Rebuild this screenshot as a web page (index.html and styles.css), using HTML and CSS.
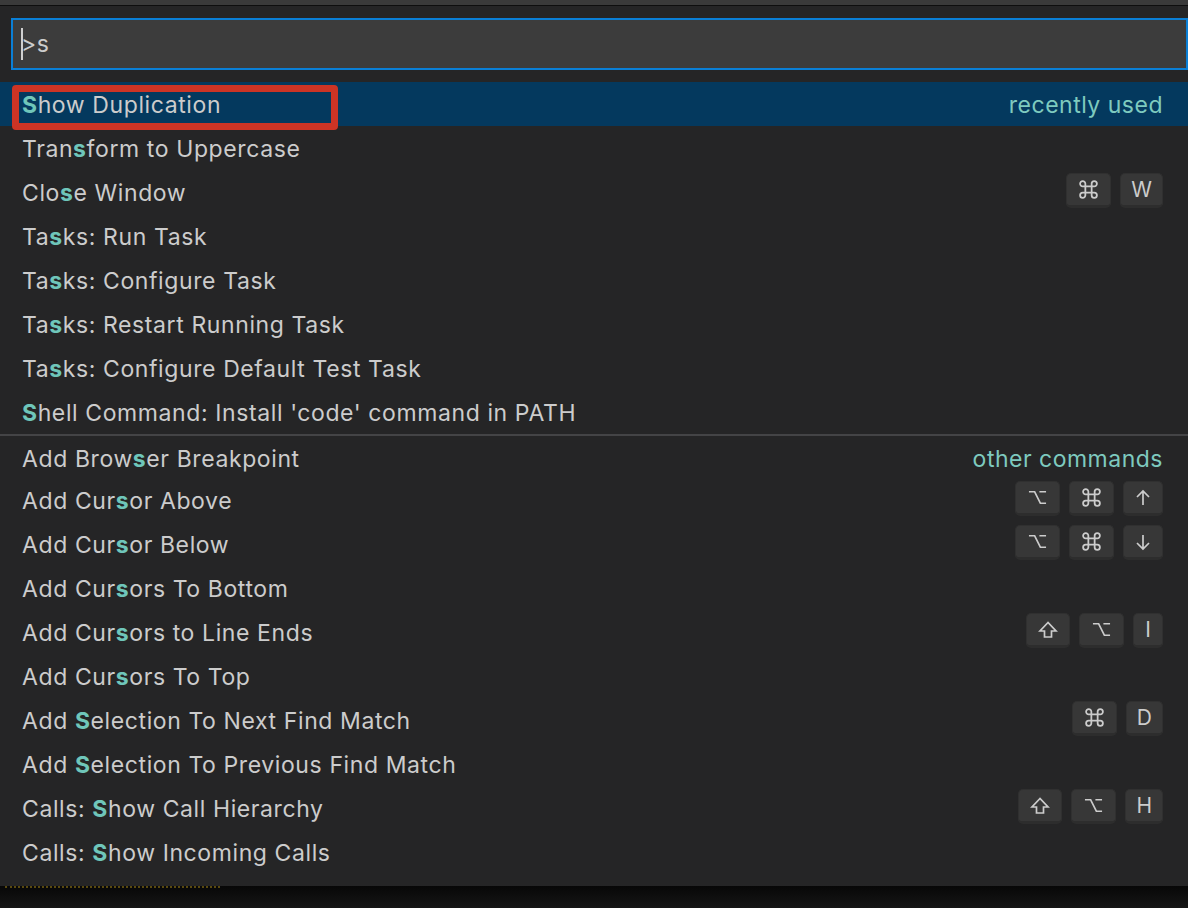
FILE: index.html
```html
<!DOCTYPE html>
<html>
<head>
<meta charset="utf-8">
<link rel="stylesheet" href="styles.css">
</head>
<body>
<div class="topbar"></div>
<div class="panel">
  <div class="input"><span class="cursor"></span><span class="query">&gt;s</span></div>
  <div class="list">
    <div class="row selected"><span class="label"><b>S</b>how Duplication</span><span class="group">recently used</span><span class="mark"></span></div>
    <div class="row"><span class="label">Tran<b>s</b>form to Uppercase</span></div>
    <div class="row"><span class="label">Clo<b>s</b>e Window</span><span class="keys"><kbd class="cmd"><svg viewBox="0 0 20 20"><path d="M7 7V4.5A2.5 2.5 0 1 0 4.5 7H15.5A2.5 2.5 0 1 0 13 4.5V15.5A2.5 2.5 0 1 0 15.5 13H4.5A2.5 2.5 0 1 0 7 15.5Z"/></svg></kbd><kbd>W</kbd></span></div>
    <div class="row"><span class="label">Ta<b>s</b>ks: Run Task</span></div>
    <div class="row"><span class="label">Ta<b>s</b>ks: Configure Task</span></div>
    <div class="row"><span class="label">Ta<b>s</b>ks: Restart Running Task</span></div>
    <div class="row"><span class="label">Ta<b>s</b>ks: Configure Default Test Task</span></div>
    <div class="row"><span class="label"><b>S</b>hell Command: Install 'code' command in PATH</span></div>
    <div class="row sep"><span class="label">Add Brow<b>s</b>er Breakpoint</span><span class="group">other commands</span></div>
    <div class="row"><span class="label">Add Cur<b>s</b>or Above</span><span class="keys"><kbd class="opt"><svg viewBox="0 0 20 20"><path d="M1 4H7L13 16H19M12 4H19"/></svg></kbd><kbd class="cmd"><svg viewBox="0 0 20 20"><path d="M7 7V4.5A2.5 2.5 0 1 0 4.5 7H15.5A2.5 2.5 0 1 0 13 4.5V15.5A2.5 2.5 0 1 0 15.5 13H4.5A2.5 2.5 0 1 0 7 15.5Z"/></svg></kbd><kbd class="arrow"><svg viewBox="0 0 20 20"><path d="M10 3V17M4 9L10 3L16 9"/></svg></kbd></span></div>
    <div class="row"><span class="label">Add Cur<b>s</b>or Below</span><span class="keys"><kbd class="opt"><svg viewBox="0 0 20 20"><path d="M1 4H7L13 16H19M12 4H19"/></svg></kbd><kbd class="cmd"><svg viewBox="0 0 20 20"><path d="M7 7V4.5A2.5 2.5 0 1 0 4.5 7H15.5A2.5 2.5 0 1 0 13 4.5V15.5A2.5 2.5 0 1 0 15.5 13H4.5A2.5 2.5 0 1 0 7 15.5Z"/></svg></kbd><kbd class="arrow"><svg viewBox="0 0 20 20"><path d="M10 3V17M4 11L10 17L16 11"/></svg></kbd></span></div>
    <div class="row"><span class="label">Add Cur<b>s</b>ors To Bottom</span></div>
    <div class="row"><span class="label">Add Cur<b>s</b>ors to Line Ends</span><span class="keys"><kbd class="shift"><svg viewBox="0 0 20 20"><path d="M10 2.5L2 11H6.5V17H13.5V11H18Z"/></svg></kbd><kbd class="opt"><svg viewBox="0 0 20 20"><path d="M1 4H7L13 16H19M12 4H19"/></svg></kbd><kbd>I</kbd></span></div>
    <div class="row"><span class="label">Add Cur<b>s</b>ors To Top</span></div>
    <div class="row"><span class="label">Add <b>S</b>election To Next Find Match</span><span class="keys"><kbd class="cmd"><svg viewBox="0 0 20 20"><path d="M7 7V4.5A2.5 2.5 0 1 0 4.5 7H15.5A2.5 2.5 0 1 0 13 4.5V15.5A2.5 2.5 0 1 0 15.5 13H4.5A2.5 2.5 0 1 0 7 15.5Z"/></svg></kbd><kbd>D</kbd></span></div>
    <div class="row"><span class="label">Add <b>S</b>election To Previous Find Match</span></div>
    <div class="row"><span class="label">Calls: <b>S</b>how Call Hierarchy</span><span class="keys"><kbd class="shift"><svg viewBox="0 0 20 20"><path d="M10 2.5L2 11H6.5V17H13.5V11H18Z"/></svg></kbd><kbd class="opt"><svg viewBox="0 0 20 20"><path d="M1 4H7L13 16H19M12 4H19"/></svg></kbd><kbd>H</kbd></span></div>
    <div class="row"><span class="label">Calls: <b>S</b>how Incoming Calls</span></div>
  </div>
</div>
<div class="below"><div class="squiggle"></div></div>
</body>
</html>
```
FILE: styles.css
```css
html, body {
  margin: 0;
  padding: 0;
  background: #1e1e1e;
  font-family: Inter, "Open Sans", "Liberation Sans", sans-serif;
  overflow: hidden;
}
.topbar {
  height: 5px;
  background: #3a3a3a;
  border-bottom: 1px solid #0e0e0e;
}
.panel {
  background: #252526;
  padding: 12px 0 10px 11px;
  height: 880px;
  box-sizing: border-box;
}
.input {
  height: 52px;
  box-sizing: border-box;
  border: 2px solid #0a7fd6;
  background: #3c3c3c;
  display: flex;
  align-items: center;
  padding-left: 8px;
  color: #cccccc;
  font-size: 23px;
}
.cursor {
  width: 2px;
  height: 32px;
  background: #cfcfcf;
  margin-right: -2px;
}
.query {
  letter-spacing: 0.6px;
}
.list {
  margin-top: 12px;
  margin-left: -11px;
}
.row {
  position: relative;
  height: 44px;
  box-sizing: border-box;
  display: flex;
  align-items: center;
  justify-content: space-between;
  padding: 2px 25px 0 22px;
  color: #cccccc;
  font-size: 23px;
  letter-spacing: 0.6px;
}
.row b {
  color: #6fc6ba;
  font-weight: 700;
}
.selected {
  background: #04395e;
}
.sep {
  border-top: 2px solid #444446;
  padding-top: 3px;
}
.group {
  color: #7ecabf;
  letter-spacing: 0.5px;
}
.keys {
  display: flex;
  gap: 9px;
  margin-top: -2px;
}
kbd {
  font-family: Inter, "DejaVu Sans", sans-serif;
  font-size: 21px;
  letter-spacing: 0;
  color: #cccccc;
  height: 35px;
  box-sizing: border-box;
  padding: 0 10px;
  min-width: 30px;
  display: flex;
  align-items: center;
  justify-content: center;
  background: #373737;
  border: 1px solid #303030;
  border-bottom: 3px solid #2d2d2d;
  border-radius: 5px;
  margin-top: -3px;
}
kbd svg {
  width: 20px;
  height: 20px;
  fill: none;
  stroke: #cccccc;
  stroke-width: 1.7;
  stroke-linejoin: miter;
}
kbd.cmd svg {
  width: 21px;
  height: 21px;
}
kbd.cmd, kbd.shift {
  padding: 0 11px;
}
kbd.opt {
  padding: 0 12px;
}
kbd.opt svg {
  width: 19px;
  height: 19px;
}
kbd.arrow {
  padding: 0 9px;
}
.mark {
  position: absolute;
  left: 12px;
  top: 3px;
  width: 326px;
  height: 45px;
  box-sizing: border-box;
  border: 7px solid #cc3425;
  border-radius: 4px;
}
.below {
  height: 22px;
  background: linear-gradient(#070707, #161616);
  position: relative;
}
.squiggle {
  position: absolute;
  left: 5px;
  top: 0;
  width: 215px;
  border-top: 2px dotted #5a4a10;
}
```
